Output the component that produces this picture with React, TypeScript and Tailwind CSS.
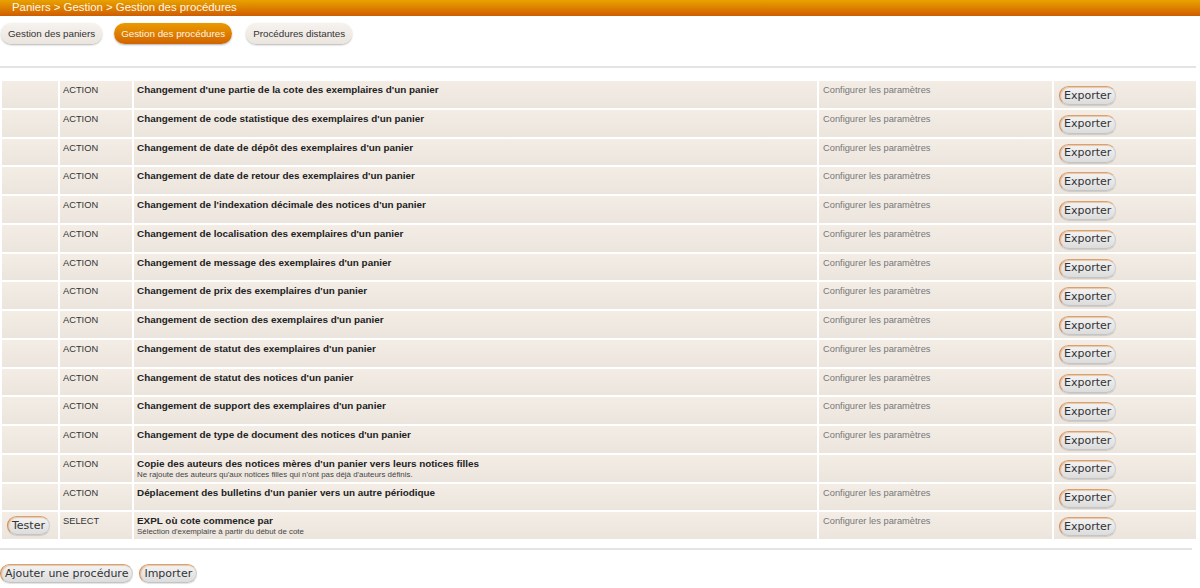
import React from "react";

const rows: { type: string; title: string; sub?: string; config: boolean; tester?: boolean }[] = [
  { type: "ACTION", title: "Changement d'une partie de la cote des exemplaires d'un panier", config: true },
  { type: "ACTION", title: "Changement de code statistique des exemplaires d'un panier", config: true },
  { type: "ACTION", title: "Changement de date de dépôt des exemplaires d'un panier", config: true },
  { type: "ACTION", title: "Changement de date de retour des exemplaires d'un panier", config: true },
  { type: "ACTION", title: "Changement de l'indexation décimale des notices d'un panier", config: true },
  { type: "ACTION", title: "Changement de localisation des exemplaires d'un panier", config: true },
  { type: "ACTION", title: "Changement de message des exemplaires d'un panier", config: true },
  { type: "ACTION", title: "Changement de prix des exemplaires d'un panier", config: true },
  { type: "ACTION", title: "Changement de section des exemplaires d'un panier", config: true },
  { type: "ACTION", title: "Changement de statut des exemplaires d'un panier", config: true },
  { type: "ACTION", title: "Changement de statut des notices d'un panier", config: true },
  { type: "ACTION", title: "Changement de support des exemplaires d'un panier", config: true },
  { type: "ACTION", title: "Changement de type de document des notices d'un panier", config: true },
  {
    type: "ACTION",
    title: "Copie des auteurs des notices mères d'un panier vers leurs notices filles",
    sub: "Ne rajoute des auteurs qu'aux notices filles qui n'ont pas déjà d'auteurs définis.",
    config: false,
  },
  { type: "ACTION", title: "Déplacement des bulletins d'un panier vers un autre périodique", config: true },
  {
    type: "SELECT",
    title: "EXPL où cote commence par",
    sub: "Sélection d'exemplaire à partir du début de cote",
    config: true,
    tester: true,
  },
];

function Btn({ children, className = "" }: { children: React.ReactNode; className?: string }) {
  return (
    <button
      className={
        "block h-[19px] rounded-full border border-t-[#d9a070] border-l-[#d08a50] border-r-[#cfcfcf] border-b-[#c4c4c4] bg-gradient-to-b from-[#f4f4f4] to-[#dcdcdc] px-[4px] text-[11px] leading-[16px] text-[#333] shadow-[inset_1px_1px_1px_rgba(220,140,70,0.45),0_1px_1px_rgba(0,0,0,0.12)] " +
        className
      }
      style={{ fontFamily: '"DejaVu Sans", sans-serif' }}
    >
      {children}
    </button>
  );
}

export default function App() {
  const cell = "bg-gradient-to-b from-[#f3ede6] to-[#ebe5de]";
  return (
    <div className="w-[1200px] h-[588px] bg-white overflow-hidden" style={{ fontFamily: '"Liberation Sans", Arial, sans-serif' }}>
      <div className="h-[16px] bg-gradient-to-b from-[#e8a200] to-[#cf5c00] pl-[12px] text-[11.4px] leading-[15px] text-[#fff6e6]">
        Paniers &gt; Gestion &gt; Gestion des procédures
      </div>
      <div className="flex items-center gap-[12px] pl-[1px] pt-[7px]">
        <div className="h-[21px] rounded-full bg-gradient-to-b from-[#f6f2ee] to-[#ebe5de] px-[7px] text-[9.8px] leading-[21px] text-[#333] shadow-[0_1px_2px_rgba(0,0,0,0.3)]">
          Gestion des paniers
        </div>
        <div className="h-[21px] rounded-full bg-gradient-to-b from-[#ea9a00] to-[#d26400] px-[7px] text-[9.8px] leading-[21px] text-[#fff4e0] shadow-[0_1px_2px_rgba(0,0,0,0.3)]">
          Gestion des procédures
        </div>
        <div className="ml-[2px] h-[21px] rounded-full bg-gradient-to-b from-[#f6f2ee] to-[#ebe5de] px-[7px] text-[9.8px] leading-[21px] text-[#333] shadow-[0_1px_2px_rgba(0,0,0,0.3)]">
          Procédures distantes
        </div>
      </div>
      <div className="mt-[22px] h-[2px] w-[1196px] bg-[#e4e4e4]" />
      <div className="mt-[13px] flex w-[1196px] flex-col gap-[2px] pl-[2px]">
        {rows.map((r, i) => (
          <div key={i} className="grid h-[26.75px] grid-cols-[56px_72px_683px_233px_1fr] gap-[2px]">
            <div className={cell + " pl-[5px] pt-[4px]"}>{r.tester && <Btn>Tester</Btn>}</div>
            <div className={cell + " pl-[3px] pt-[3px] text-[9.3px] leading-[12px] text-[#333]"}>{r.type}</div>
            <div className={cell + " pl-[3px] pt-[3px] text-[#222]"}>
              <div className="text-[9.9px] font-bold leading-[12px]">{r.title}</div>
              {r.sub && <div className="text-[7.9px] leading-[10px] text-[#444]">{r.sub}</div>}
            </div>
            <div className={cell + " pl-[4px] pt-[3px] text-[9.3px] leading-[12px] text-[#777]"}>
              {r.config ? "Configurer les paramètres" : ""}
            </div>
            <div className={cell + " pl-[5px] pt-[5px]"}>
              <Btn>Exporter</Btn>
            </div>
          </div>
        ))}
      </div>
      <div className="mt-[9px] h-[2px] w-[1192px] bg-[#e4e4e4]" />
      <div className="mt-[14px] flex gap-[6px]">
        <Btn>Ajouter une procédure</Btn>
        <Btn>Importer</Btn>
      </div>
    </div>
  );
}
